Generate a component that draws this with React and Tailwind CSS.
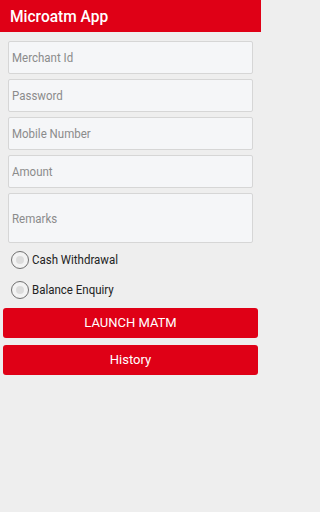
import React from "react";

function Field({ placeholder, tall }) {
  return (
    <div
      className={`mx-2 flex items-center rounded-[2px] border border-[#d6d6d6] bg-[#f5f6f8] px-[3px] ${tall ? "h-[50px]" : "h-[33px]"}`}
    >
      <span className="scale-y-110 pt-[3px] text-[11.5px] text-[#8b8b8b]">{placeholder}</span>
    </div>
  );
}

function Radio({ label }) {
  return (
    <div className="flex h-[30px] items-center pl-[11px]">
      <div className="flex h-[18px] w-[18px] items-center justify-center rounded-full border border-[#707070] bg-[#f3f3f3]">
        <div className="h-[8px] w-[8px] rounded-full bg-[#dcdcdc]" />
      </div>
      <span className="ml-[3px] scale-y-110 pt-[2px] text-[11.5px] text-[#222]">{label}</span>
    </div>
  );
}

export default function App() {
  return (
    <div className="min-h-[512px] w-full bg-[#eeeeee]">
      <div
        className="flex h-[512px] w-[261px] flex-col bg-[#eeeeee]"
        style={{ fontFamily: "Roboto, 'Liberation Sans', sans-serif" }}
      >
        <div className="flex h-[32px] items-center bg-[#df0016] pl-[10px]">
          <span className="scale-y-110 pt-[2px] text-[15.5px] font-medium text-white">Microatm App</span>
        </div>
        <div className="mt-[9px] flex flex-col gap-[5px]">
          <Field placeholder="Merchant Id" />
          <Field placeholder="Password" />
          <Field placeholder="Mobile Number" />
          <Field placeholder="Amount" />
          <Field placeholder="Remarks" tall />
        </div>
        <div className="mt-[2px] flex flex-col">
          <Radio label="Cash Withdrawal" />
          <Radio label="Balance Enquiry" />
        </div>
        <div className="mx-[3px] mt-[3px] flex flex-col gap-[7px]">
          <div className="flex h-[30px] items-center justify-center rounded-[3px] bg-[#df0016]">
            <span className="text-[13px] text-white">LAUNCH MATM</span>
          </div>
          <div className="flex h-[30px] items-center justify-center rounded-[3px] bg-[#df0016]">
            <span className="text-[13px] text-white">History</span>
          </div>
        </div>
      </div>
    </div>
  );
}
